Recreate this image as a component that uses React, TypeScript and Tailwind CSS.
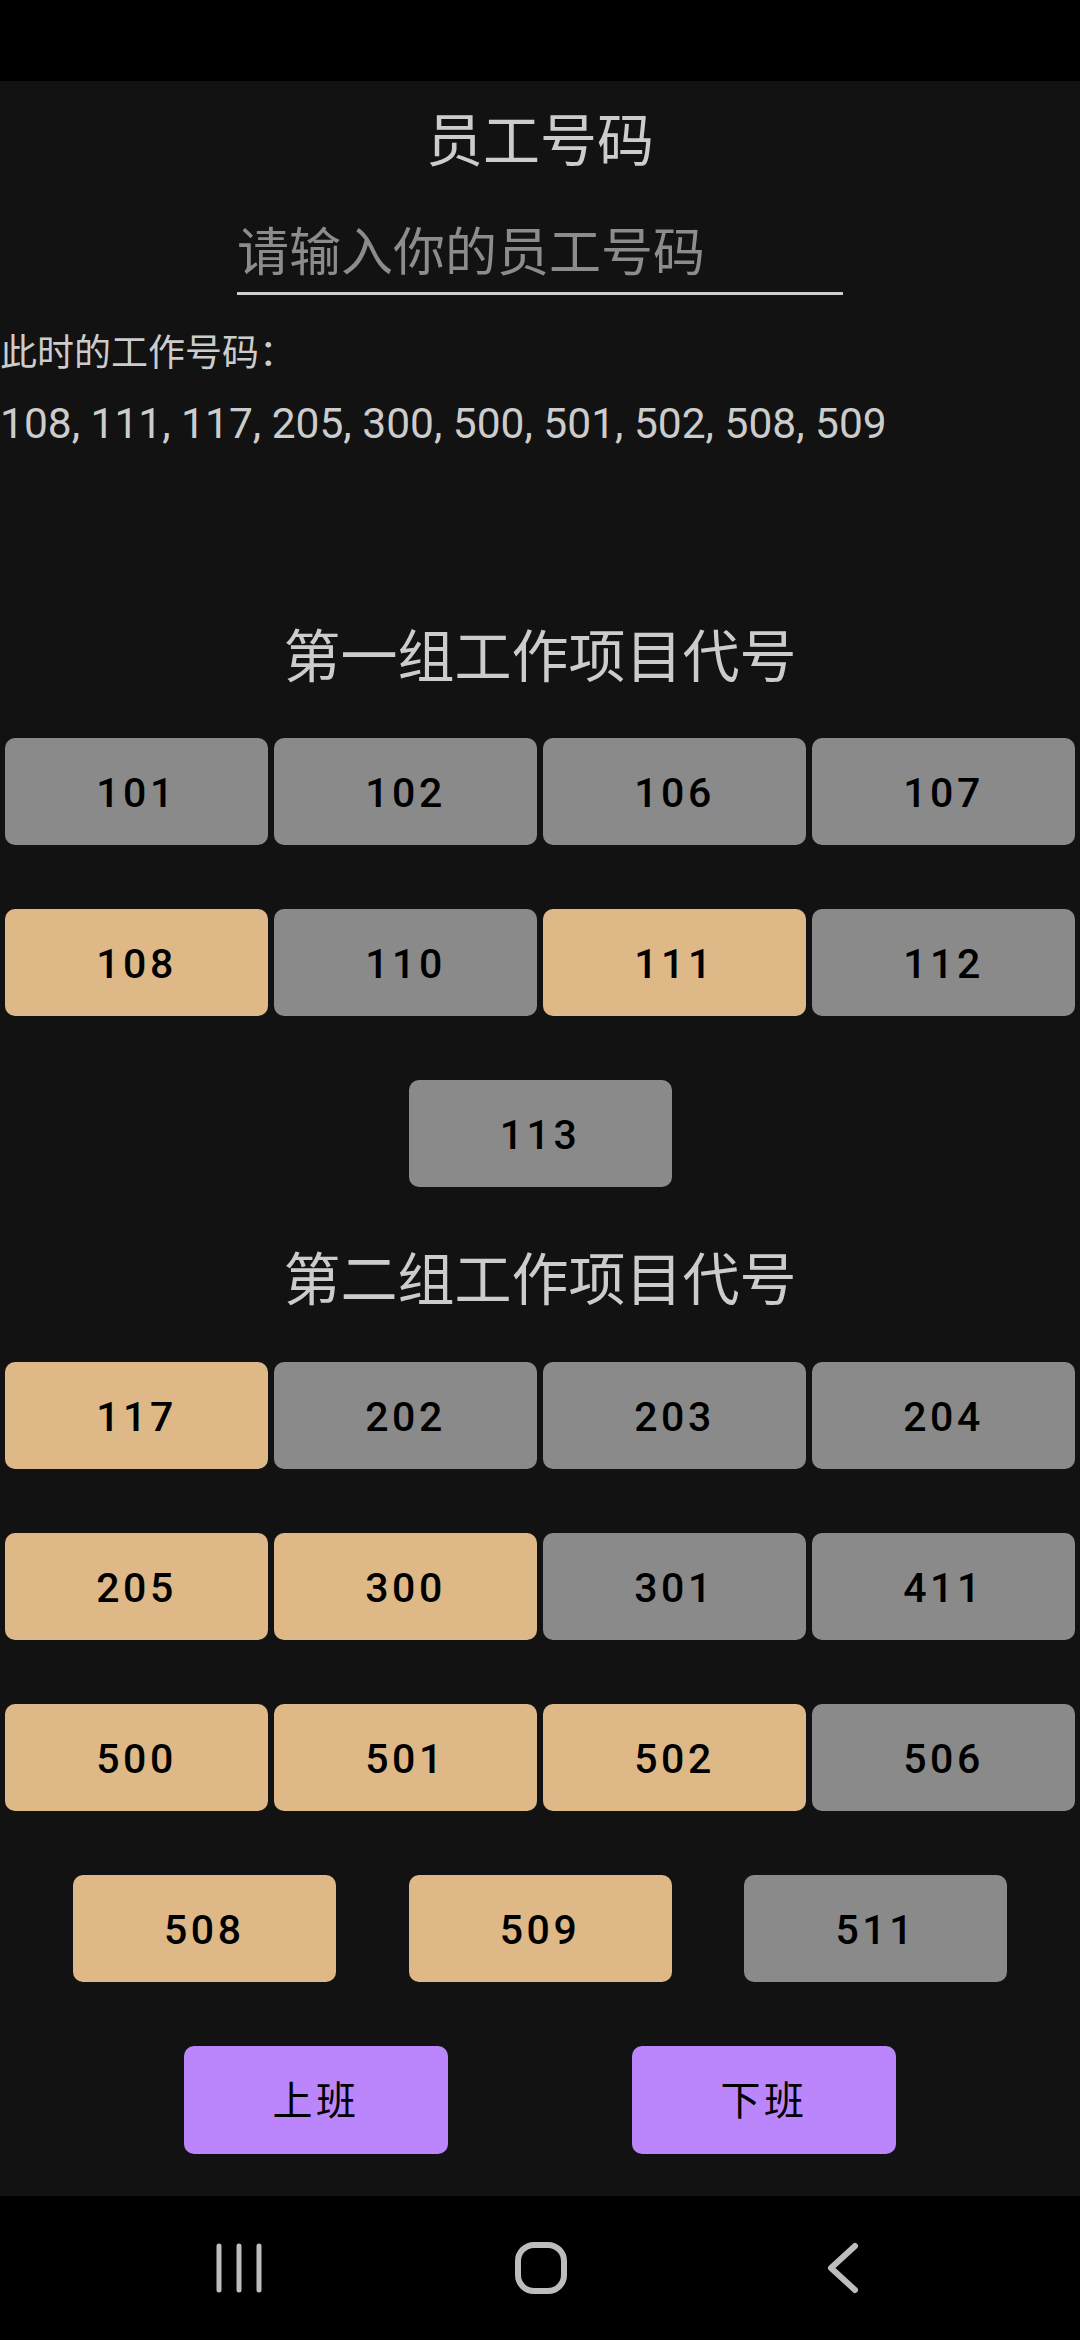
import React from 'react';

const selected = [108, 111, 117, 205, 300, 500, 501, 502, 508, 509];

const group1 = [[101, 102, 106, 107], [108, 110, 111, 112]];
const group2 = [[117, 202, 203, 204], [205, 300, 301, 411], [500, 501, 502, 506]];

function CodeButton({ code }: { code: number }) {
    const on = selected.includes(code);
    return (
        <button
            className={
                'w-[263px] h-[107px] pt-[5px] rounded-[10px] flex items-center justify-center text-[41px] font-medium tracking-[0.085em] text-black ' +
                (on ? 'bg-[#deb887]' : 'bg-[#8a8a8a]')
            }
            style={{ fontFamily: 'Roboto, "Noto Sans CJK SC", sans-serif' }}
        >
            {code}
        </button>
    );
}

function GroupTitle({ text }: { text: string }) {
    return (
        <div
            className="h-[70px] leading-[70px] text-center text-[57px] text-[#cccccc]"
            style={{ fontFamily: '"Noto Sans CJK SC", sans-serif' }}
        >
            {text}
        </div>
    );
}

export default function App() {
    return (
        <div className="w-[1080px] h-[2340px] flex flex-col bg-black overflow-hidden">
            {/* status bar */}
            <div className="h-[81px] bg-black shrink-0" />

            <div className="h-[2115px] bg-[#121212] flex flex-col shrink-0">
                {/* header */}
                <div
                    className="mt-[20px] h-[70px] leading-[70px] text-center text-[57px] text-[#cccccc]"
                    style={{ fontFamily: '"Noto Sans CJK SC", sans-serif' }}
                >
                    员工号码
                </div>

                <div className="mt-[48px] mx-auto w-[606px] pb-[13px] border-b-[3px] border-[#cfcfcf]">
                    <div
                        className="h-[60px] leading-[60px] text-[52px] text-[#8c8c8c]"
                        style={{ fontFamily: '"Noto Sans CJK SC", sans-serif' }}
                    >
                        请输入你的员工号码
                    </div>
                </div>

                <div
                    className="mt-[33px] h-[44px] leading-[44px] text-[37px] text-[#cccccc]"
                    style={{ fontFamily: '"Noto Sans CJK SC", sans-serif' }}
                >
                    此时的工作号码：
                </div>
                <div
                    className="mt-[27px] h-[50px] leading-[50px] text-[42.5px] text-[#cccccc]"
                    style={{ fontFamily: 'Roboto, sans-serif' }}
                >
                    {selected.join(', ')}
                </div>

                {/* group 1 */}
                <div className="mt-[168px]">
                    <GroupTitle text="第一组工作项目代号" />
                </div>
                <div className="mt-[51px] flex flex-col gap-[64px]">
                    {group1.map((row, i) => (
                        <div key={i} className="flex gap-[6px] px-[5px]">
                            {row.map((c) => (
                                <CodeButton key={c} code={c} />
                            ))}
                        </div>
                    ))}
                    <div className="flex justify-center">
                        <CodeButton code={113} />
                    </div>
                </div>

                {/* group 2 */}
                <div className="mt-[53px]">
                    <GroupTitle text="第二组工作项目代号" />
                </div>
                <div className="mt-[52px] flex flex-col gap-[64px]">
                    {group2.map((row, i) => (
                        <div key={i} className="flex gap-[6px] px-[5px]">
                            {row.map((c) => (
                                <CodeButton key={c} code={c} />
                            ))}
                        </div>
                    ))}
                    <div className="flex justify-evenly">
                        <CodeButton code={508} />
                        <CodeButton code={509} />
                        <CodeButton code={511} />
                    </div>
                    <div className="flex justify-evenly">
                        {['上班', '下班'].map((t) => (
                            <button
                                key={t}
                                className="w-[264px] h-[108px] pt-[4px] rounded-[10px] bg-[#bb86fc] flex items-center justify-center text-[40px] tracking-[0.09em] text-black"
                                style={{ fontFamily: 'Roboto, "Noto Sans CJK SC", sans-serif' }}
                            >
                                {t}
                            </button>
                        ))}
                    </div>
                </div>
            </div>

            {/* nav bar */}
            <div className="h-[144px] bg-black flex items-center pl-[88px] shrink-0">
                <div className="w-[302px] flex justify-center">
                    <svg width="50" height="52" viewBox="0 0 50 52" fill="none" stroke="#bdbdbd" strokeWidth="5" strokeLinecap="round">
                        <line x1="5" y1="4" x2="5" y2="48" />
                        <line x1="25" y1="4" x2="25" y2="48" />
                        <line x1="45" y1="4" x2="45" y2="48" />
                    </svg>
                </div>
                <div className="w-[302px] flex justify-center">
                    <svg width="56" height="56" viewBox="0 0 56 56" fill="none" stroke="#bdbdbd" strokeWidth="6">
                        <rect x="5" y="5" width="46" height="46" rx="16" />
                    </svg>
                </div>
                <div className="w-[302px] flex justify-center">
                    <svg width="40" height="56" viewBox="0 0 40 56" fill="none" stroke="#bdbdbd" strokeWidth="6" strokeLinecap="round" strokeLinejoin="round">
                        <polyline points="32,6 8,28 32,50" />
                    </svg>
                </div>
            </div>
        </div>
    );
}
